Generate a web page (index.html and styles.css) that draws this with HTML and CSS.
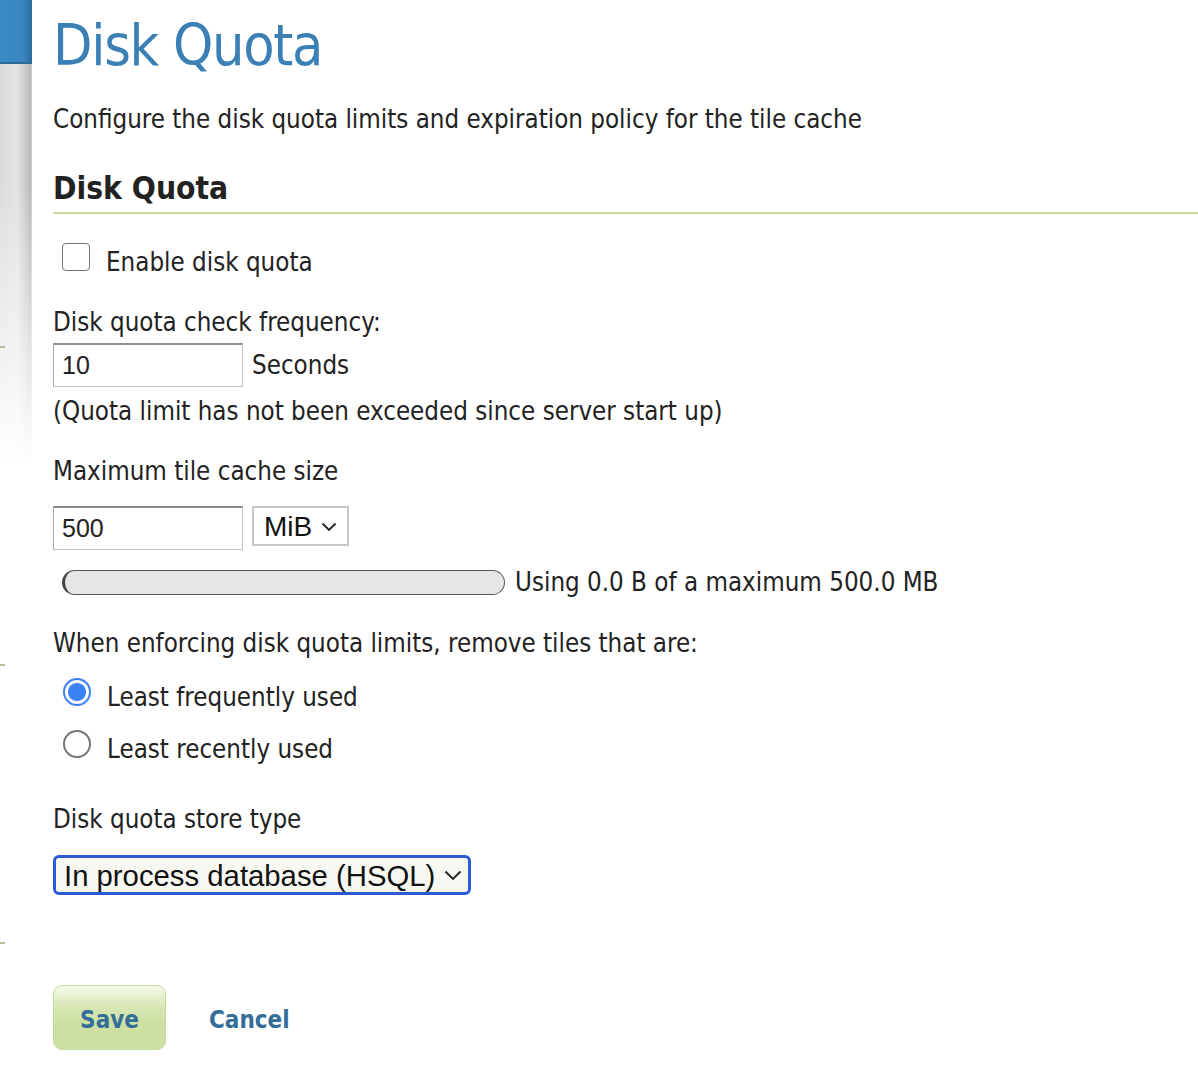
FILE: index.html
```html
<!DOCTYPE html>
<html>
<head>
<meta charset="utf-8">
<link rel="stylesheet" href="styles.css">
</head>
<body>
<div class="page">
  <aside class="sidebar">
    <div class="side-head"></div>
    <div class="side-body">
      <span class="tick t1"></span>
      <span class="tick t2"></span>
      <span class="tick t3"></span>
    </div>
  </aside>
  <main class="main">
    <h1 class="title">Disk Quota</h1>
    <p class="desc">Configure the disk quota limits and expiration policy for the tile cache</p>
    <h2 class="section">Disk Quota</h2>

    <label class="check-row"><span class="checkbox"></span><span>Enable disk quota</span></label>

    <div class="label freq-label">Disk quota check frequency:</div>
    <div class="field-row">
      <input class="text-input" type="text" value="10"><span class="unit">Seconds</span>
    </div>
    <div class="note">(Quota limit has not been exceeded since server start up)</div>

    <div class="label max-label">Maximum tile cache size</div>
    <div class="field-row size-row">
      <input class="text-input" type="text" value="500">
      <div class="select-wrap small">
        <select class="select unit-select"><option>MiB</option></select>
        <svg class="chev" width="16" height="10" viewBox="0 0 16 10"><path d="M1.5 1.5 L8 8 L14.5 1.5" fill="none" stroke="#222" stroke-width="1.8"/></svg>
      </div>
    </div>

    <div class="usage-row">
      <div class="bar"><div class="bar-fill"></div></div>
      <span class="usage-text">Using 0.0 B of a maximum 500.0 MB</span>
    </div>

    <div class="label enforce-label">When enforcing disk quota limits, remove tiles that are:</div>
    <label class="radio-row first"><span class="radio on"></span><span>Least frequently used</span></label>
    <label class="radio-row"><span class="radio"></span><span>Least recently used</span></label>

    <div class="label store-label">Disk quota store type</div>
    <div class="select-wrap big">
      <select class="select store-select"><option>In process database (HSQL)</option></select>
      <svg class="chev" width="18" height="11" viewBox="0 0 18 11"><path d="M1.5 1.5 L9 9 L16.5 1.5" fill="none" stroke="#222" stroke-width="1.8"/></svg>
    </div>

    <div class="buttons">
      <button class="save">Save</button>
      <a class="cancel" href="#">Cancel</a>
    </div>
  </main>
</div>
</body>
</html>
```

FILE: styles.css
```css
html, body {
  margin: 0;
  padding: 0;
  background: #fff;
}
body {
  font-family: "DejaVu Sans Condensed", "DejaVu Sans", sans-serif;
  color: #222;
  font-size: 25.7px;
}
.page {
  display: flex;
  min-height: 1074px;
}
.sidebar {
  width: 32px;
  flex: 0 0 32px;
  display: flex;
  flex-direction: column;
}
.side-head {
  height: 64px;
  background: linear-gradient(to right, #3a8ac4 0%, #3a86c0 70%, #2b6c9e 100%);
  border-bottom: 2px solid #2a6a98;
  box-sizing: border-box;
}
.side-body {
  position: relative;
  flex: 1;
  background: linear-gradient(to right, #dcdcdc 0%, #e2e2e2 55%, #c2c2c2 88%, #b8b8b8 95%, #d6d6d6 100%);
  background-size: 100% 400px;
  background-repeat: no-repeat;
}
.side-body::after {
  content: "";
  position: absolute;
  left: 0; right: 0; top: 0; height: 400px;
  background: linear-gradient(to bottom, rgba(255,255,255,0) 0%, rgba(255,255,255,0) 30%, #fff 100%);
}
.tick {
  position: absolute;
  left: 0;
  width: 5px;
  height: 2px;
  background: #b9bca0;
  z-index: 1;
}
.t1 { top: 282px; }
.t2 { top: 600px; }
.t3 { top: 878px; }

.main {
  flex: 1;
  padding-left: 21px;
}
.title {
  margin: 14px 0 0 0;
  font-weight: normal;
  font-size: 57px;
  letter-spacing: -1.3px;
  line-height: 62px;
  color: #3a80b5;
}
.desc {
  margin: 27px 0 0 0;
  line-height: 32px;
}
.section {
  margin: 33px 0 0 0;
  font-size: 31.5px;
  line-height: 40px;
  font-weight: bold;
  color: #222;
  padding-bottom: 4px;
  border-bottom: 2px solid #c8dd9c;
}
.check-row {
  display: flex;
  align-items: center;
  gap: 16px;
  margin: 32px 0 0 9px;
  line-height: 32px;
}
.checkbox {
  width: 26px;
  height: 26px;
  border: 1.5px solid #767676;
  border-radius: 4px;
  background: #fff;
  margin-top: -11px;
}
.label {
  line-height: 32px;
}
.freq-label { margin-top: 28px; }
.field-row {
  display: flex;
  align-items: center;
  gap: 9px;
  margin-top: 5px;
}
.text-input {
  box-sizing: border-box;
  width: 190px;
  height: 44px;
  margin: 0;
  padding: 0 8px;
  border: 1px solid #c2c2c2;
  border-top: 2px solid #8c8c8c;
  border-left: 1px solid #a8a8a8;
  font-family: "Liberation Sans", Arial, sans-serif;
  font-size: 25px;
  color: #222;
  background: #fff;
}
.unit { line-height: 32px; }
.note { margin-top: 8px; line-height: 32px; }
.max-label { margin-top: 28px; }
.size-row { margin-top: 19px; align-items: flex-start; }
.select-wrap {
  position: relative;
  display: inline-block;
}
.select {
  -webkit-appearance: none;
  appearance: none;
  margin: 0;
  font-family: "Liberation Sans", Arial, sans-serif;
  color: #111;
  box-sizing: border-box;
}
.unit-select {
  width: 97px;
  height: 40px;
  padding: 0 0 0 10px;
  border: 2px solid #c6c6c6;
  border-radius: 0;
  background: #fff;
  font-size: 28px;
}
.small .chev { position: absolute; right: 12px; top: 16px; pointer-events: none; }
.usage-row {
  display: flex;
  align-items: center;
  gap: 10px;
  margin: 16px 0 0 9px;
}
.bar {
  box-sizing: border-box;
  width: 443px;
  height: 25px;
  border: 1.5px solid #555;
  border-left: 3px solid #444;
  border-radius: 13px;
  background: #e6e6e6;
}
.usage-text { line-height: 32px; }
.enforce-label { margin-top: 29px; }
.radio-row {
  display: flex;
  align-items: center;
  gap: 16px;
  margin: 22px 0 0 10px;
  line-height: 32px;
}
.radio-row + .radio-row { margin-top: 20px; }
.radio {
  box-sizing: border-box;
  width: 28px;
  height: 28px;
  border-radius: 50%;
  border: 2px solid #767676;
  background: #fff;
  margin-top: -10px;
}
.radio.on {
  border: 2px solid #3b82f6;
  background: radial-gradient(circle, #3b82f6 0 8.5px, #fff 9.5px);
}
.store-label { margin-top: 38px; }
.big { margin-top: 20px; display: block; width: 418px; }
.store-select {
  display: block;
  width: 418px;
  height: 40px;
  padding: 0 0 0 8px;
  border: 3px solid #2a5bd0;
  border-radius: 6px;
  background: #f8f8f3;
  font-size: 29.3px;
  outline: none;
}
.big .chev { position: absolute; right: 9px; top: 15px; pointer-events: none; }
.buttons {
  display: flex;
  align-items: center;
  gap: 43px;
  margin-top: 90px;
}
.save {
  box-sizing: border-box;
  width: 113px;
  height: 65px;
  border: 1px solid #c5dc9a;
  border-radius: 9px;
  background: linear-gradient(to bottom, #f6faee 0%, #d9e8b8 30%, #cde0a2 60%, #cde0a2 100%);
  font-family: "DejaVu Sans Condensed", "DejaVu Sans", sans-serif;
  font-weight: bold;
  font-size: 24px;
  color: #336e99;
  padding: 5px 0 0 0;
}
.cancel {
  font-family: "DejaVu Sans Condensed", "DejaVu Sans", sans-serif;
  font-weight: bold;
  font-size: 24px;
  color: #336e99;
  text-decoration: none;
  padding-top: 5px;
}
```
